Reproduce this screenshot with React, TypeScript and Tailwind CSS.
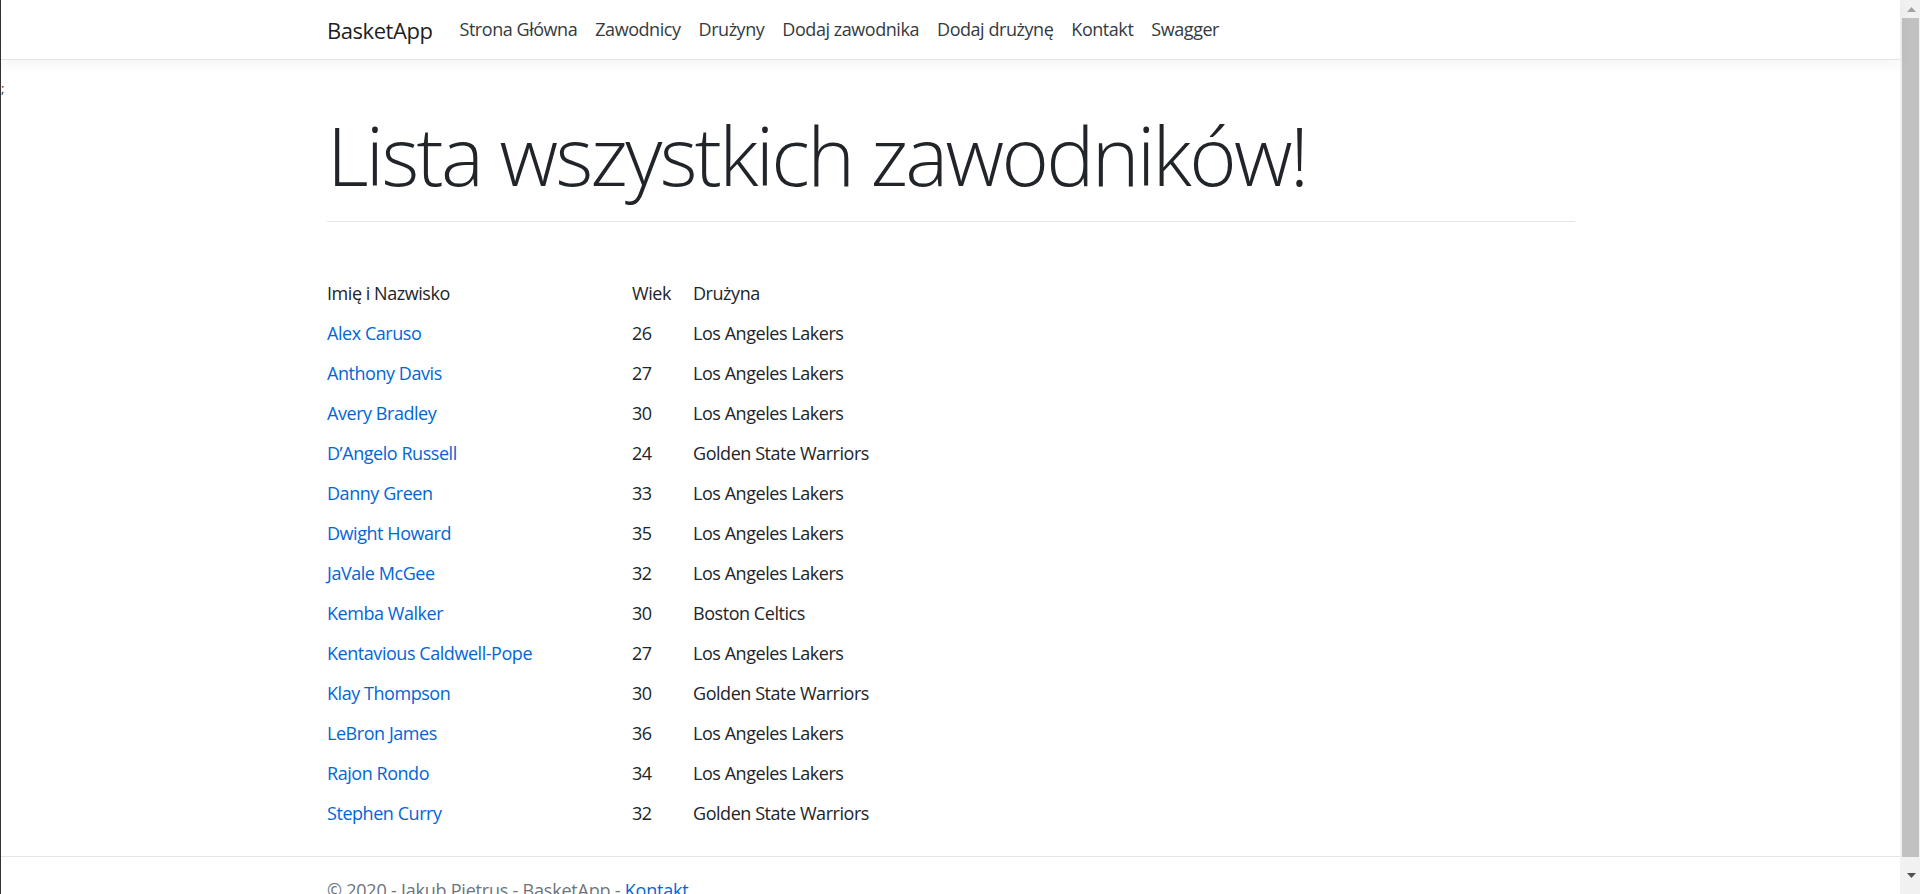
import React from "react";

const links = [
  "Strona Główna",
  "Zawodnicy",
  "Drużyny",
  "Dodaj zawodnika",
  "Dodaj drużynę",
  "Kontakt",
  "Swagger",
];

const players: [string, number, string][] = [
  ["Alex Caruso", 26, "Los Angeles Lakers"],
  ["Anthony Davis", 27, "Los Angeles Lakers"],
  ["Avery Bradley", 30, "Los Angeles Lakers"],
  ["D’Angelo Russell", 24, "Golden State Warriors"],
  ["Danny Green", 33, "Los Angeles Lakers"],
  ["Dwight Howard", 35, "Los Angeles Lakers"],
  ["JaVale McGee", 32, "Los Angeles Lakers"],
  ["Kemba Walker", 30, "Boston Celtics"],
  ["Kentavious Caldwell-Pope", 27, "Los Angeles Lakers"],
  ["Klay Thompson", 30, "Golden State Warriors"],
  ["LeBron James", 36, "Los Angeles Lakers"],
  ["Rajon Rondo", 34, "Los Angeles Lakers"],
  ["Stephen Curry", 32, "Golden State Warriors"],
];

function Scrollbar() {
  return (
    <div className="flex w-[20px] shrink-0 flex-col bg-[#f1f1f1]">
      <div className="flex h-[18px] items-center justify-center pl-[2px]">
        <svg width="9" height="5" viewBox="0 0 9 5">
          <path d="M4.5 0 L9 5 L0 5 Z" fill="#a3a3a3" />
        </svg>
      </div>
      <div className="ml-[2px] mr-px h-[839px] bg-[#c1c1c1]" />
      <div className="flex flex-1 items-center justify-center pl-[2px]">
        <svg width="9" height="5" viewBox="0 0 9 5">
          <path d="M0 0 L9 0 L4.5 5 Z" fill="#505050" />
        </svg>
      </div>
    </div>
  );
}

export default function App() {
  return (
    <div className="flex h-[894px] overflow-hidden bg-white font-['Open_Sans','Noto_Sans',sans-serif] text-[18px] tracking-[-0.025em] text-[#212529]">
      <div className="w-px shrink-0 bg-[#333]" />

      <div className="relative flex min-w-0 flex-1 flex-col">
        {/* navbar */}
        <header className="relative z-10 h-[60px] shrink-0 border-b border-[#e5e5e5] bg-white shadow-[0_4px_14px_rgba(0,0,0,0.05)]">
          <nav className="ml-[326px] flex h-full items-center">
            <a className="mr-[18px] text-[22px] leading-none text-black/90">
              BasketApp
            </a>
            <ul className="flex">
              {links.map((l) => (
                <li key={l}>
                  <a className="block px-[9px] leading-[27px] text-[#343a40]">
                    {l}
                  </a>
                </li>
              ))}
            </ul>
          </nav>
        </header>

        <span className="absolute left-0 top-[82px] text-[13px] leading-none text-[#333]">
          ;
        </span>

        {/* content */}
        <main className="ml-[326px] w-[1248px]">
          <h1 className="mt-[46px] text-[81px] font-light leading-[1.2] tracking-[-0.033em]">
            Lista wszystkich zawodników!
          </h1>
          <hr className="mt-[18px] border-t border-black/10" />

          <div className="mt-[51px] grid grid-cols-[305px_61px_auto] leading-[40px]">
            <div>Imię i Nazwisko</div>
            <div>Wiek</div>
            <div>Drużyna</div>
            {players.map(([name, age, team]) => (
              <React.Fragment key={name}>
                <a className="text-[#0366d6]">{name}</a>
                <div>{age}</div>
                <div>{team}</div>
              </React.Fragment>
            ))}
          </div>
        </main>

        <footer className="mt-[23px] border-t border-[#e5e5e5] leading-[67px] tracking-[-0.012em] text-[#6c757d]">
          <div className="ml-[326px]">
            © 2020 - Jakub Pietrus - BasketApp -{" "}
            <a className="text-[#0366d6]">Kontakt</a>
          </div>
        </footer>
      </div>

      <Scrollbar />
    </div>
  );
}
